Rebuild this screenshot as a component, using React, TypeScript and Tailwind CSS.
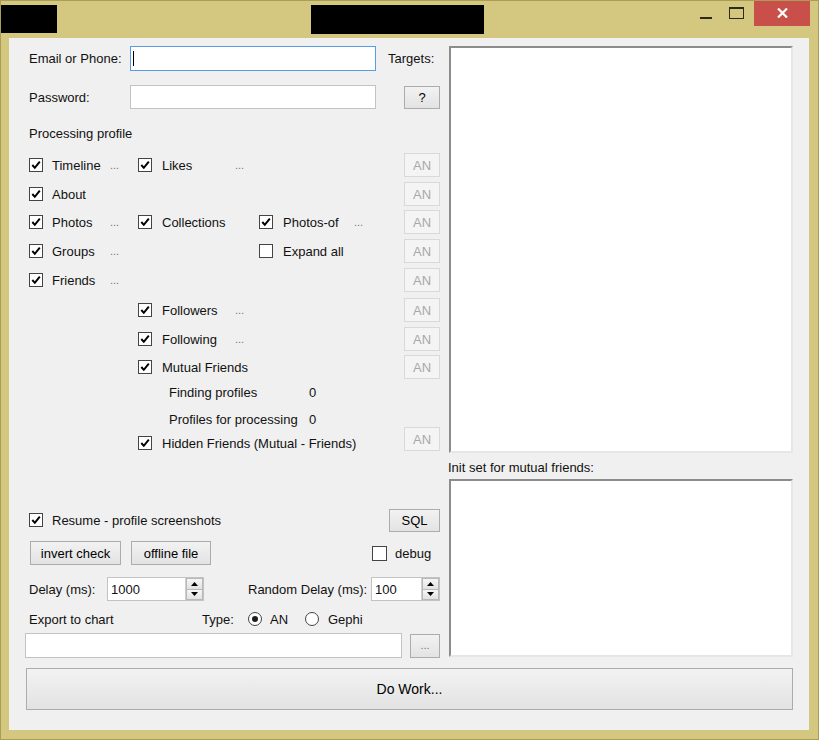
import React from "react";

function Check({ checked = true }: { checked?: boolean }) {
  return (
    <span className="w-[14px] h-[14px] border border-[#444] bg-white flex items-center justify-center shrink-0">
      {checked && (
        <svg width="12" height="12" viewBox="0 0 12 12">
          <path d="M2.3 6 L4.8 8.8 L9.8 2.6" fill="none" stroke="#000" strokeWidth="2" />
        </svg>
      )}
    </span>
  );
}

function Radio({ checked }: { checked?: boolean }) {
  return (
    <span className="w-[14px] h-[14px] rounded-full border border-[#444] bg-white flex items-center justify-center shrink-0">
      {checked && <span className="w-[6px] h-[6px] rounded-full bg-[#1e1e1e]" />}
    </span>
  );
}

function Btn({ children, className = "" }: { children: React.ReactNode; className?: string }) {
  return (
    <div className={`flex items-center justify-center border border-[#acacac] bg-gradient-to-b from-[#f2f2f2] to-[#e3e3e3] text-black ${className}`}>
      {children}
    </div>
  );
}

function AN() {
  return (
    <div className="ml-auto w-[36px] h-[24px] flex items-center justify-center border border-[#d9d9d9] bg-[#f4f4f4] text-[#a8a8a8]">
      AN
    </div>
  );
}

function Dots() {
  return <span className="text-[#777] text-[11px]">...</span>;
}

function Spin() {
  return (
    <div className="w-[18px] h-full flex flex-col border-l border-[#d0d0d0]">
      <div className="flex-1 flex items-center justify-center border border-[#b8b8b8] bg-gradient-to-b from-[#f6f6f6] to-[#e2e2e2]">
        <svg width="7" height="4" viewBox="0 0 7 4"><path d="M0 4 L3.5 0 L7 4 Z" fill="#000" /></svg>
      </div>
      <div className="flex-1 flex items-center justify-center border border-t-0 border-[#b8b8b8] bg-gradient-to-b from-[#f6f6f6] to-[#e2e2e2]">
        <svg width="7" height="4" viewBox="0 0 7 4"><path d="M0 0 L7 0 L3.5 4 Z" fill="#000" /></svg>
      </div>
    </div>
  );
}

function CellA({ label, dots, checked = true }: { label: string; dots?: boolean; checked?: boolean }) {
  return (
    <div className="w-[113px] pl-[4px] flex items-center shrink-0">
      <Check checked={checked} />
      <span className="ml-[9px] w-[58px] whitespace-nowrap">{label}</span>
      {dots && <Dots />}
    </div>
  );
}

function CellB({ label, dots, checked = true, wide }: { label: string; dots?: boolean; checked?: boolean; wide?: boolean }) {
  return (
    <div className={`${wide ? "" : "w-[121px]"} flex items-center shrink-0`}>
      <Check checked={checked} />
      <span className={`ml-[10px] ${wide ? "" : "w-[73px]"} whitespace-nowrap`}>{label}</span>
      {dots && <Dots />}
    </div>
  );
}

function CellC({ label, dots, checked = true }: { label: string; dots?: boolean; checked?: boolean }) {
  return (
    <div className="w-[145px] flex items-center shrink-0">
      <Check checked={checked} />
      <span className="ml-[10px] w-[71px] whitespace-nowrap">{label}</span>
      {dots && <Dots />}
    </div>
  );
}

const Empty = ({ w }: { w: string }) => <div className={`${w} shrink-0`} />;

export default function App() {
  return (
    <div className="w-[819px] h-[740px] bg-[#d4c880] border border-[#ab9d58] flex flex-col font-['Liberation_Sans',Arial,sans-serif] text-[13px] text-[#111] leading-none overflow-hidden">
      {/* Title bar */}
      <div className="h-[37px] flex items-start shrink-0">
        <div className="-ml-[1px] mt-[4px] w-[57px] h-[28px] bg-black" />
        <div className="ml-[254px] mt-[4px] w-[173px] h-[29px] bg-black" />
        <div className="ml-[216px] mt-[16px] w-[12px] h-[2px] bg-[#2d2a17]" />
        <div className="ml-[17px] mt-[6px] w-[15px] h-[12px] border border-t-2 border-[#2d2a17]" />
        <div className="ml-[10px] -mt-[1px] w-[56px] h-[26px] bg-[#c94f4b] flex items-center justify-center">
          <svg width="11" height="10" viewBox="0 0 11 10">
            <path d="M1 0.5 L10 9.5 M10 0.5 L1 9.5" stroke="#fff" strokeWidth="2.2" />
          </svg>
        </div>
      </div>

      {/* Client area */}
      <div className="flex-1 ml-[8px] mr-[9px] mb-[9px] bg-[#f0f0f0] px-[16px] pt-[8px] flex flex-col">
        <div className="flex gap-[9px]">
          {/* Left column */}
          <div className="w-[415px] shrink-0 flex flex-col">
            <div className="flex items-center h-[25px]">
              <span className="pl-[4px] w-[105px]">Email or Phone:</span>
              <div className="w-[246px] h-[25px] border border-[#569de5] bg-white flex items-center">
                <div className="ml-[2px] w-[1px] h-[15px] bg-black" />
              </div>
              <span className="ml-[12px]">Targets:</span>
            </div>
            <div className="flex items-center h-[24px] mt-[14px]">
              <span className="pl-[4px] w-[105px]">Password:</span>
              <div className="w-[246px] h-[24px] border border-[#c3c3c3] bg-white" />
              <Btn className="ml-auto w-[36px] h-[23px]">?</Btn>
            </div>
            <div className="h-[16px] mt-[16px] pl-[4px] flex items-center">Processing profile</div>

            <div className="flex items-center h-[24px] mt-[12px]">
              <CellA label="Timeline" dots />
              <CellB label="Likes" dots />
              <AN />
            </div>
            <div className="flex items-center h-[24px] mt-[5px]">
              <CellA label="About" />
              <AN />
            </div>
            <div className="flex items-center h-[24px] mt-[4px]">
              <CellA label="Photos" dots />
              <CellB label="Collections" />
              <CellC label="Photos-of" dots />
              <AN />
            </div>
            <div className="flex items-center h-[24px] mt-[5px]">
              <CellA label="Groups" dots />
              <Empty w="w-[121px]" />
              <CellC label="Expand all" checked={false} />
              <AN />
            </div>
            <div className="flex items-center h-[24px] mt-[5px]">
              <CellA label="Friends" dots />
              <AN />
            </div>
            <div className="flex items-center h-[24px] mt-[6px]">
              <Empty w="w-[113px]" />
              <CellB label="Followers" dots />
              <AN />
            </div>
            <div className="flex items-center h-[24px] mt-[5px]">
              <Empty w="w-[113px]" />
              <CellB label="Following" dots />
              <AN />
            </div>
            <div className="flex items-center h-[24px] mt-[4px]">
              <Empty w="w-[113px]" />
              <CellB label="Mutual Friends" wide />
              <AN />
            </div>
            <div className="flex items-center h-[24px] mt-[1px]">
              <Empty w="w-[144px]" />
              <span className="w-[140px]">Finding profiles</span>
              <span>0</span>
            </div>
            <div className="flex items-center h-[24px] mt-[3px]">
              <Empty w="w-[144px]" />
              <span className="w-[140px] whitespace-nowrap">Profiles for processing</span>
              <span>0</span>
            </div>
            <div className="flex items-center h-[24px]">
              <Empty w="w-[113px]" />
              <CellB label="Hidden Friends (Mutual - Friends)" wide />
              <div className="ml-auto -mt-[8px]">
                <AN />
              </div>
            </div>

            <div className="flex items-center h-[24px] mt-[53px]">
              <div className="pl-[4px] flex items-center">
                <Check />
                <span className="ml-[9px]">Resume - profile screenshots</span>
              </div>
              <Btn className="ml-auto w-[51px] h-[23px]">SQL</Btn>
            </div>
            <div className="flex items-center h-[24px] mt-[9px]">
              <Btn className="ml-[5px] w-[91px] h-[24px]">invert check</Btn>
              <Btn className="ml-[10px] w-[80px] h-[24px]">offline file</Btn>
              <div className="ml-[161px] flex items-center">
                <span className="w-[15px] h-[15px] border border-[#444] bg-white" />
                <span className="ml-[8px]">debug</span>
              </div>
            </div>
            <div className="flex items-center h-[24px] mt-[12px]">
              <span className="pl-[4px] w-[82px]">Delay (ms):</span>
              <div className="w-[97px] h-[24px] border border-[#c3c3c3] bg-white flex items-center">
                <span className="ml-[3px] flex-1">1000</span>
                <Spin />
              </div>
              <span className="ml-[44px] w-[123px] whitespace-nowrap">Random Delay (ms):</span>
              <div className="w-[69px] h-[24px] border border-[#c3c3c3] bg-white flex items-center">
                <span className="ml-[3px] flex-1">100</span>
                <Spin />
              </div>
            </div>
            <div className="flex items-center h-[16px] mt-[10px]">
              <span className="pl-[4px] w-[177px]">Export to chart</span>
              <span className="w-[46px]">Type:</span>
              <Radio checked />
              <span className="ml-[8px] w-[35px]">AN</span>
              <Radio />
              <span className="ml-[9px]">Gephi</span>
            </div>
            <div className="flex items-center h-[25px] mt-[6px]">
              <div className="w-[377px] h-[25px] border border-[#c3c3c3] bg-white" />
              <Btn className="ml-auto w-[30px] h-[24px]">
                <span className="text-[#777] text-[11px]">...</span>
              </Btn>
            </div>
          </div>

          {/* Right column */}
          <div className="w-[344px] shrink-0 flex flex-col">
            <div className="h-[407px] bg-white border-2 border-t-[#8c8c8c] border-l-[#8c8c8c] border-r-[#e6e6e6] border-b-[#e6e6e6]" />
            <div className="h-[16px] mt-[6px] flex items-center -ml-[1px]">Init set for mutual friends:</div>
            <div className="h-[178px] mt-[4px] bg-white border-2 border-t-[#8c8c8c] border-l-[#8c8c8c] border-r-[#e6e6e6] border-b-[#e6e6e6]" />
          </div>
        </div>

        <Btn className="mt-[10px] ml-[1px] w-[767px] h-[42px] text-[14px]">Do Work...</Btn>
      </div>
    </div>
  );
}
